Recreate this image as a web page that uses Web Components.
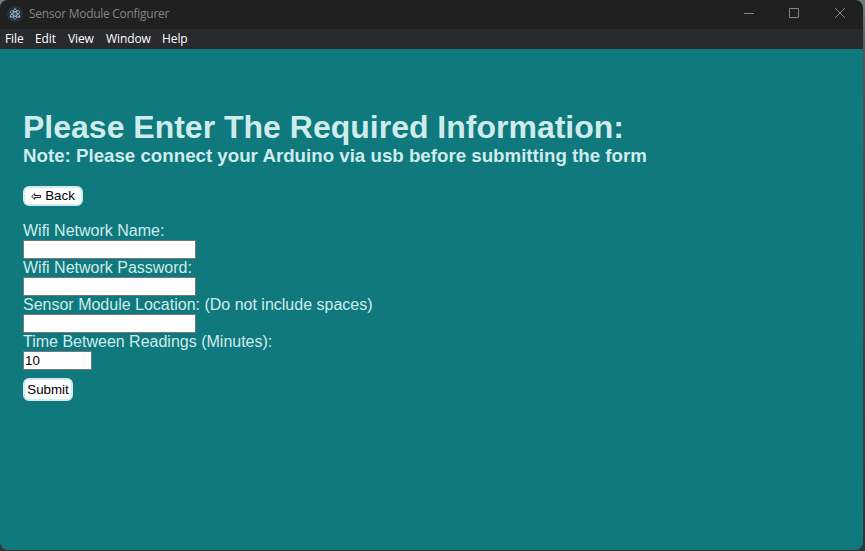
<!DOCTYPE html>
<html lang="en">
<head>
<meta charset="utf-8">
<title>Sensor Module Configurer</title>
<style>
html,body{margin:0;height:551px;overflow:hidden}
body{background:linear-gradient(#747c80 0,#50585a 50px,#48504f 120px,#3c4446 300px,#303638 551px);font-family:"Liberation Sans",Arial,sans-serif}
</style>
</head>
<body>
<app-window>
  <title-bar slot="bar">Sensor Module Configurer</title-bar>
  <menu-bar slot="bar">
    <menu-entry style="--w:30px">File</menu-entry><menu-entry style="--w:33px">Edit</menu-entry><menu-entry style="--w:38px">View</menu-entry><menu-entry style="--w:56px">Window</menu-entry><menu-entry style="--w:26px">Help</menu-entry>
  </menu-bar>
  <sensor-form></sensor-form>
</app-window>
<script>
function define(name, html) {
  const template = document.createElement('template');
  template.innerHTML = html;
  customElements.define(name, class extends HTMLElement {
    constructor() {
      super();
      this.attachShadow({mode: 'open'}).append(template.content.cloneNode(true));
    }
    connectedCallback() {
      const input = this.shadowRoot.querySelector('input');
      if (input && this.hasAttribute('value')) input.value = this.getAttribute('value');
    }
  });
}

define('app-window', `<style>
:host{display:flex;flex-direction:column;width:863px;height:550px;border-radius:8px;overflow:hidden;background:#10797d}
</style><slot name="bar"></slot><slot></slot>`);

define('title-bar', `<style>
:host{display:flex;align-items:center;height:29px;box-sizing:border-box;padding-left:7px;background:#202020;color:#858585;font:12px/28px "Open Sans","Noto Sans",sans-serif}
.logo{width:16px;height:16px;margin:-2px 6px 0 0}
.name{flex:1;white-space:nowrap;letter-spacing:-.28px;margin-top:-1px}
.controls{width:138px;height:29px;flex:none}
</style>
<svg class="logo" viewBox="0 0 16 16"><circle cx="8" cy="8" r="8" fill="#2b2e3b"/><g fill="none" stroke="#9bc4cf" stroke-width=".7"><ellipse cx="8" cy="8" rx="5.200" ry="2" transform="rotate(90 8 8)"/><ellipse cx="8" cy="8" rx="5.200" ry="2" transform="rotate(30 8 8)"/><ellipse cx="8" cy="8" rx="5.200" ry="2" transform="rotate(150 8 8)"/></g><g fill="#9bc4cf"><circle cx="8" cy="8" r=".6"/><circle cx="8" cy="2.900" r=".7"/><circle cx="3.700" cy="10.600" r=".9"/><circle cx="12.300" cy="10.600" r=".9"/></g></svg>
<span class="name"><slot></slot></span>
<svg class="controls" viewBox="0 0 138 29" fill="none" stroke="#858585"><path d="M19 13.500h10M64.500 8.500h9v9h-9zM110 8l10 10M120 8l-10 10"/></svg>`);

define('menu-bar', `<style>
:host{display:flex;height:20px;box-sizing:border-box;padding-left:5px;background:#292a2d;color:#fff;font:12px/20px "Open Sans","Noto Sans",sans-serif}
</style><slot></slot>`);

define('menu-entry', `<style>:host{display:block;flex:none;width:var(--w);white-space:nowrap;letter-spacing:-.1px}</style><slot></slot>`);

define('push-button', `<style>
:host{display:block}
button{display:flex;align-items:center;justify-content:center;width:var(--w);height:var(--h);box-sizing:border-box;padding:0 0 var(--lift,0);margin:0;border:2px solid #cfecec;border-radius:6px;background:#fff;color:#000;font:13.333px/15px "Liberation Sans",Arial,sans-serif;white-space:pre}
</style><button type="button"><slot></slot></button>`);

define('form-field', `<style>
:host{display:block;font-size:16px;line-height:18px}
label{display:block;height:18px;white-space:nowrap}
input{display:block;box-sizing:border-box;width:var(--w,173px);height:19px;margin:0;padding:1px;border:1px solid #767676;background:#fff;color:#000;font:13.333px/15px "Liberation Sans",Arial,sans-serif}
</style><label><slot></slot></label><input type="text">`);

define('sensor-form', `<style>
:host{display:flex;flex-direction:column;flex:1;padding:60px 23px 0;color:#cfecec}
h1{margin:0;font-size:32px;line-height:36px;white-space:nowrap}
h3{margin:0 0 19px;font-size:18.72px;line-height:22px;white-space:nowrap}
.back{margin-bottom:16px}
.send{margin-top:8px}
.back svg{width:10px;height:7px;margin:2px 4px 0 0;flex:none}
</style>
<h1>Please Enter The Required Information:</h1>
<h3>Note: Please connect your Arduino via usb before submitting the form</h3>
<push-button class="back" style="--w:60px;--h:20px;--lift:2px"><svg viewBox="0 0 10 7" fill="none" stroke="#000" stroke-width=".9"><path d="M.7 3.500L3.700.7v1.800h5.800v2H3.700v1.800z"/></svg>Back</push-button>
<form-field>Wifi Network Name:</form-field>
<form-field>Wifi Network Password:</form-field>
<form-field>Sensor Module Location: (Do not include spaces)</form-field>
<form-field value="10" style="--w:69px">Time Between Readings (Minutes):</form-field>
<push-button class="send" style="--w:50px;--h:23px">Submit</push-button>`);
</script>
</body>
</html>
